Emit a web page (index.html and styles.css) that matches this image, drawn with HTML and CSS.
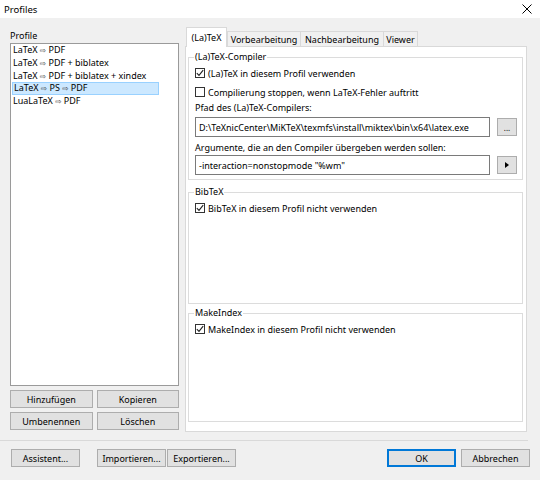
FILE: index.html
```html
<!DOCTYPE html>
<html>
<head>
<meta charset="utf-8">
<link rel="stylesheet" href="styles.css">
</head>
<body>
<div class="window">
  <div class="titlebar">
    <span class="title">Profiles</span>
    <svg class="close" width="10" height="10" viewBox="0 0 10 10"><path d="M0.5 0.5 L9.5 9.5 M9.5 0.5 L0.5 9.5" stroke="#000" stroke-width="1" fill="none"/></svg>
  </div>
  <div class="main">
    <div class="left">
      <div class="lbl">Profile</div>
      <ul class="list">
        <li>LaTeX <span class="arr">⇨</span> PDF</li>
        <li>LaTeX <span class="arr">⇨</span> PDF + biblatex</li>
        <li>LaTeX <span class="arr">⇨</span> PDF + biblatex + xindex</li>
        <li class="sel">LaTeX <span class="arr">⇨</span> PS <span class="arr">⇨</span> PDF</li>
        <li>LuaLaTeX <span class="arr">⇨</span> PDF</li>
      </ul>
      <div class="btngrid">
        <button class="btn">Hinzufügen</button>
        <button class="btn">Kopieren</button>
        <button class="btn">Umbenennen</button>
        <button class="btn">Löschen</button>
      </div>
    </div>
    <div class="right">
      <div class="tabs">
        <div class="tab active t1">(La)TeX</div>
        <div class="tab t2">Vorbearbeitung</div>
        <div class="tab t3">Nachbearbeitung</div>
        <div class="tab t4">Viewer</div>
      </div>
      <div class="panel">
        <fieldset class="grp g1">
          <legend>(La)TeX-Compiler</legend>
          <div class="cb r1"><span class="box"><svg width="8" height="8" viewBox="0 0 8 8"><path d="M0.8 4.2 L3 6.4 L7.2 1.2" stroke="#222" stroke-width="1.1" fill="none"/></svg></span>(La)TeX in diesem Profil verwenden</div>
          <div class="cb r2"><span class="box"></span>Compilierung stoppen, wenn LaTeX-Fehler auftritt</div>
          <div class="flabel fl1">Pfad des (La)TeX-Compilers:</div>
          <div class="inrow">
            <div class="textbox">D:\TeXnicCenter\MiKTeX\texmfs\install\miktex\bin\x64\latex.exe</div>
            <button class="sbtn">...</button>
          </div>
          <div class="flabel fl2">Argumente, die an den Compiler übergeben werden sollen:</div>
          <div class="inrow">
            <div class="textbox">-interaction=nonstopmode "%wm"</div>
            <button class="sbtn"><svg width="4" height="6" viewBox="0 0 4 6"><polygon points="0,0 4,3 0,6" fill="#000"/></svg></button>
          </div>
        </fieldset>
        <fieldset class="grp g2">
          <legend>BibTeX</legend>
          <div class="cb r1"><span class="box"><svg width="8" height="8" viewBox="0 0 8 8"><path d="M0.8 4.2 L3 6.4 L7.2 1.2" stroke="#222" stroke-width="1.1" fill="none"/></svg></span>BibTeX in diesem Profil nicht verwenden</div>
        </fieldset>
        <fieldset class="grp g3">
          <legend>MakeIndex</legend>
          <div class="cb r1"><span class="box"><svg width="8" height="8" viewBox="0 0 8 8"><path d="M0.8 4.2 L3 6.4 L7.2 1.2" stroke="#222" stroke-width="1.1" fill="none"/></svg></span>MakeIndex in diesem Profil nicht verwenden</div>
        </fieldset>
      </div>
    </div>
  </div>
  <div class="sep"></div>
  <div class="footer">
    <button class="btn fb">Assistent...</button>
    <button class="btn fb imp">Importieren...</button>
    <button class="btn fb exp">Exportieren...</button>
    <div class="spacer"></div>
    <button class="btn fb ok">OK</button>
    <button class="btn fb cancel">Abbrechen</button>
  </div>
</div>
</body>
</html>
```
FILE: styles.css
```css
html, body {
  margin: 0;
  padding: 0;
}
body {
  width: 540px;
  height: 480px;
  overflow: hidden;
  background: #f0f0f0;
  font-family: "Noto Sans", "DejaVu Sans", sans-serif;
  font-size: 9px;
  color: #000;
}
.window {
  width: 540px;
  height: 480px;
}
.titlebar {
  height: 18px;
  background: #fff;
  display: flex;
  align-items: center;
  justify-content: space-between;
  padding: 0 8px 0 4px;
}
.title {
  font-size: 9.5px;
}
.main {
  display: flex;
  align-items: flex-start;
  padding: 9px 13px 0 10px;
  gap: 6px;
}
.left {
  width: 169px;
  padding-top: 2px;
}
.lbl {
  line-height: 13px;
  height: 13px;
}
.list {
  margin: 1px 0 0 0;
  padding: 0;
  list-style: none;
  height: 343px;
  box-sizing: border-box;
  border: 1px solid #9a9a9a;
  background: #fff;
}
.list li {
  height: 12.75px;
  line-height: 12.75px;
  padding-left: 2px;
  white-space: nowrap;
}
.list li.sel {
  box-sizing: border-box;
  width: 147px;
  margin-left: 1px;
  padding-left: 1px;
  background: #cce8ff;
  border: 1px solid #99d1ff;
  line-height: 10.75px;
}
.arr {
  font-family: "DejaVu Sans", sans-serif;
  font-size: 7.5px;
  color: #333;
}
.btngrid {
  display: grid;
  grid-template-columns: 1fr 1fr;
  gap: 4px;
  margin-top: 4px;
}
.btn {
  height: 18px;
  box-sizing: border-box;
  background: #e1e1e1;
  border: 1px solid #adadad;
  font-family: inherit;
  font-size: 9px;
  color: #000;
  padding: 0;
  margin: 0;
}
.right {
  width: 342px;
}
.tabs {
  display: flex;
  align-items: flex-end;
  height: 20px;
  margin-bottom: -1px;
}
.tab {
  box-sizing: border-box;
  height: 15px;
  margin-bottom: 1px;
  border: 1px solid #d9d9d9;
  border-bottom: none;
  background: #f0f0f0;
  display: flex;
  align-items: center;
  justify-content: center;
  white-space: nowrap;
}
.tab.active {
  position: relative;
  z-index: 2;
  height: 20px;
  margin-bottom: 0;
  background: #fff;
  align-items: flex-start;
  padding-top: 3px;
}
.t1 { width: 41px; margin-left: 1px; }
.t2 { width: 74px; }
.t3 { width: 84px; margin-left: -1px; }
.t4 { width: 35px; margin-left: -1px; }
.panel {
  box-sizing: border-box;
  height: 386px;
  border: 1px solid #d9d9d9;
  background: #fff;
  padding: 2px 3px 0 2px;
  display: flex;
  flex-direction: column;
}
.grp {
  margin: 0;
  padding: 0 5px 0 6px;
  border: 1px solid #dcdcdc;
  min-width: 0;
  box-sizing: border-box;
}
.grp legend {
  padding: 0 1px;
  margin-left: -1px;
  line-height: 12px;
  height: 12px;
}
.g1 {
  margin-top: 2px;
  padding-bottom: 4px;
}
.g2 {
  margin-top: 6px;
  height: 118px;
}
.g3 {
  margin-top: 3px;
  height: 115px;
}
.cb {
  display: flex;
  align-items: center;
  height: 20px;
  white-space: nowrap;
}
.g1 .r2 {
  height: 18px;
}
.box {
  box-sizing: border-box;
  width: 10px;
  height: 10px;
  border: 1px solid #333;
  background: #fff;
  margin-right: 3px;
  display: flex;
  align-items: center;
  justify-content: center;
  flex: none;
}
.flabel {
  line-height: 14px;
  height: 14px;
  white-space: nowrap;
}
.fl2 {
  margin-top: 4px;
}
.inrow {
  display: flex;
  align-items: center;
  gap: 7px;
  height: 20px;
}
.fl1 + .inrow {
  margin-top: 2px;
}
.textbox {
  flex: 1;
  height: 20px;
  box-sizing: border-box;
  border: 1px solid #7a7a7a;
  background: #fff;
  padding-left: 3px;
  display: flex;
  align-items: center;
  white-space: nowrap;
  overflow: hidden;
}
.sbtn {
  width: 20px;
  height: 18px;
  box-sizing: border-box;
  background: #e1e1e1;
  border: 1px solid #adadad;
  padding: 0;
  margin: 0;
  font-family: inherit;
  font-size: 8px;
  color: #000;
  display: flex;
  align-items: center;
  justify-content: center;
}
.sep {
  height: 0;
  border-top: 1px solid #d9d9d9;
  margin: 8px 12px 0 0;
}
.footer {
  display: flex;
  padding: 8px 10px 0 11px;
}
.fb {
  width: 69px;
}
.imp { margin-left: 17px; }
.exp { margin-left: 1px; }
.spacer { flex: 1; }
.ok {
  border-color: #0078d7;
  box-shadow: inset 0 0 0 1px #0078d7;
}
.cancel { margin-left: 5px; }
```
